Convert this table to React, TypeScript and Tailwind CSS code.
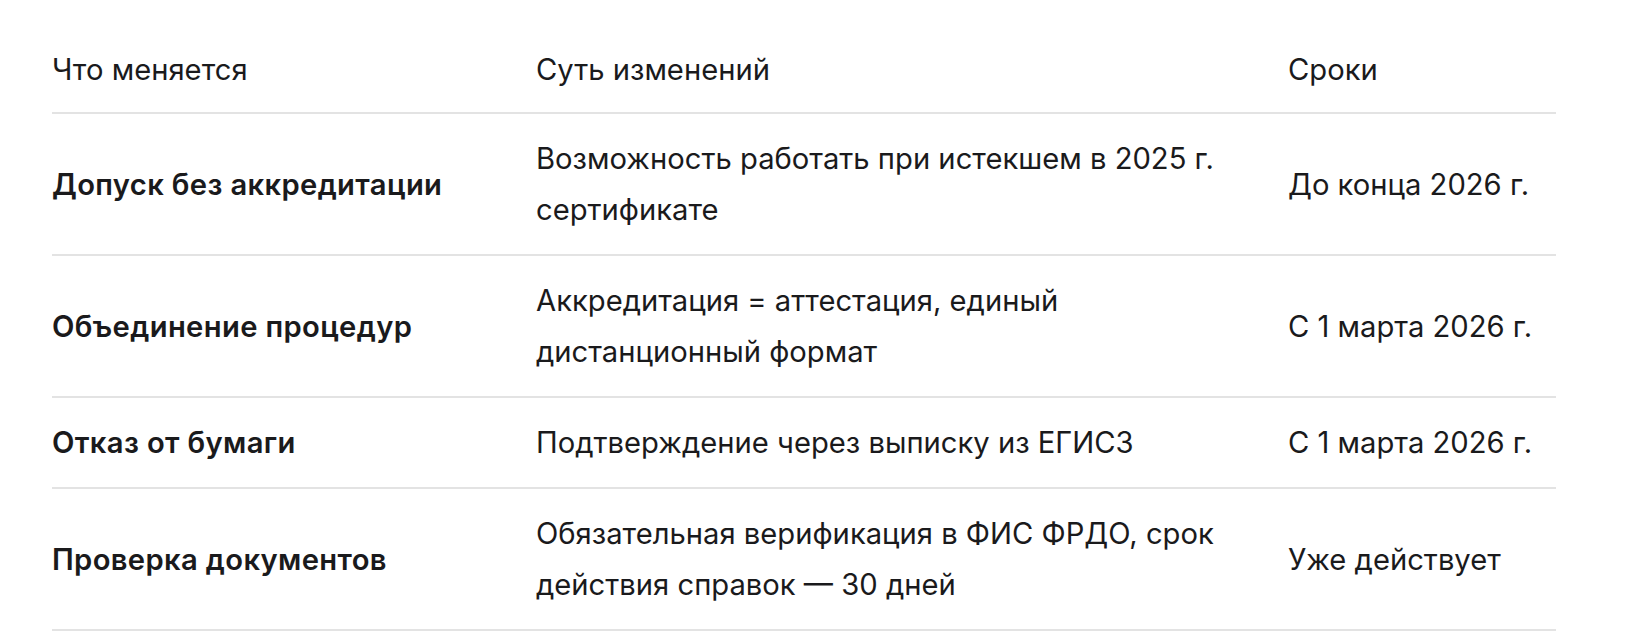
const rows = [
  {
    what: 'Допуск без аккредитации',
    essence: 'Возможность работать при истекшем в 2025 г. сертификате',
    when: 'До конца 2026 г.',
  },
  {
    what: 'Объединение процедур',
    essence: 'Аккредитация = аттестация, единый дистанционный формат',
    when: 'С 1 марта 2026 г.',
  },
  {
    what: 'Отказ от бумаги',
    essence: 'Подтверждение через выписку из ЕГИСЗ',
    when: 'С 1 марта 2026 г.',
  },
  {
    what: 'Проверка документов',
    essence: 'Обязательная верификация в ФИС ФРДО, срок действия справок — 30 дней',
    when: 'Уже действует',
  },
]

export default function App() {
  return (
    <div className="min-h-screen bg-white px-[52px] pt-[25px] font-['Inter',sans-serif] text-[29.2px] leading-[51px] text-[#1a1a1c] antialiased">
      <table className="w-[1504px] table-fixed border-collapse text-left">
        <colgroup>
          <col className="w-[484px]" />
          <col className="w-[752px]" />
          <col className="w-[268px]" />
        </colgroup>
        <thead>
          <tr className="border-b-2 border-[#e3e3e3]">
            <th className="pt-[19px] pb-[17px] font-normal">Что меняется</th>
            <th className="pt-[19px] pb-[17px] pr-[60px] font-normal">Суть изменений</th>
            <th className="pt-[19px] pb-[17px] font-normal">Сроки</th>
          </tr>
        </thead>
        <tbody>
          {rows.map((r) => (
            <tr key={r.what} className="border-b-2 border-[#e3e3e3]">
              <td className="py-[19px] pr-6 align-middle font-semibold tracking-[0.35px]">{r.what}</td>
              <td className="py-[19px] pr-[60px] align-middle">{r.essence}</td>
              <td className="py-[19px] align-middle whitespace-nowrap">{r.when}</td>
            </tr>
          ))}
        </tbody>
      </table>
    </div>
  )
}
